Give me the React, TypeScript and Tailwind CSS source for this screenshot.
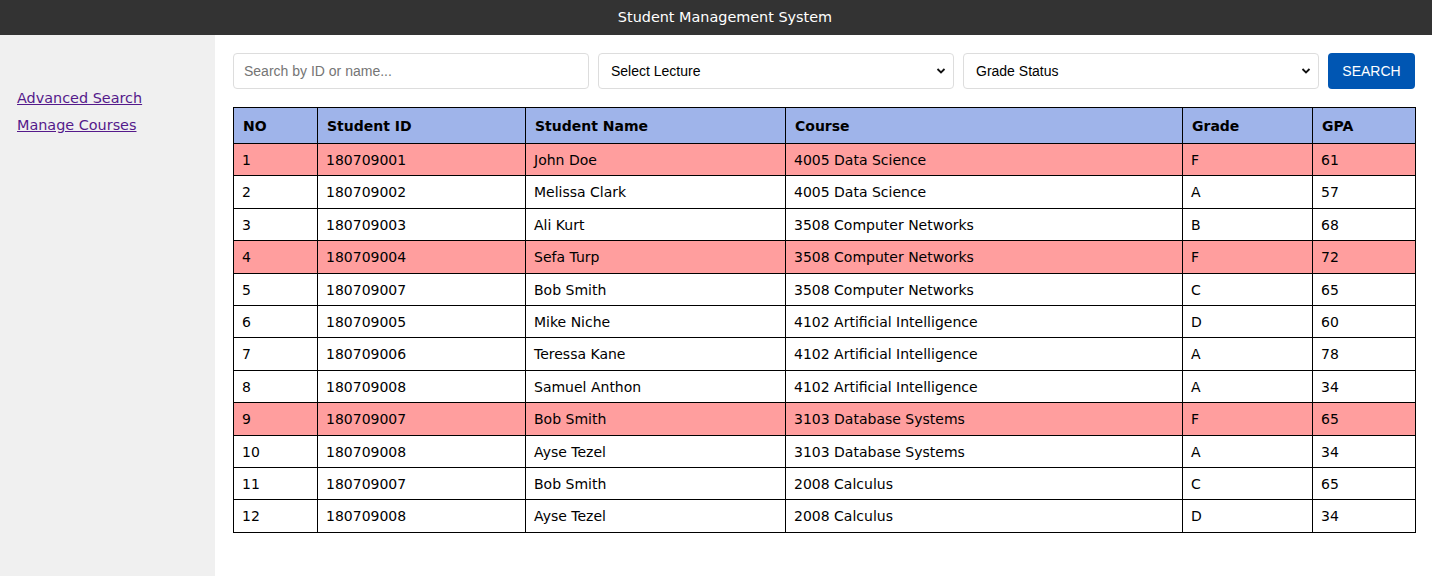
const students = [
  { no: 1, id: '180709001', name: 'John Doe', course: '4005 Data Science', grade: 'F', gpa: 61 },
  { no: 2, id: '180709002', name: 'Melissa Clark', course: '4005 Data Science', grade: 'A', gpa: 57 },
  { no: 3, id: '180709003', name: 'Ali Kurt', course: '3508 Computer Networks', grade: 'B', gpa: 68 },
  { no: 4, id: '180709004', name: 'Sefa Turp', course: '3508 Computer Networks', grade: 'F', gpa: 72 },
  { no: 5, id: '180709007', name: 'Bob Smith', course: '3508 Computer Networks', grade: 'C', gpa: 65 },
  { no: 6, id: '180709005', name: 'Mike Niche', course: '4102 Artificial Intelligence', grade: 'D', gpa: 60 },
  { no: 7, id: '180709006', name: 'Teressa Kane', course: '4102 Artificial Intelligence', grade: 'A', gpa: 78 },
  { no: 8, id: '180709008', name: 'Samuel Anthon', course: '4102 Artificial Intelligence', grade: 'A', gpa: 34 },
  { no: 9, id: '180709007', name: 'Bob Smith', course: '3103 Database Systems', grade: 'F', gpa: 65 },
  { no: 10, id: '180709008', name: 'Ayse Tezel', course: '3103 Database Systems', grade: 'A', gpa: 34 },
  { no: 11, id: '180709007', name: 'Bob Smith', course: '2008 Calculus', grade: 'C', gpa: 65 },
  { no: 12, id: '180709008', name: 'Ayse Tezel', course: '2008 Calculus', grade: 'D', gpa: 34 },
];

const headers = [
  { label: 'NO', w: 'w-[84px]' },
  { label: 'Student ID', w: 'w-[208px]' },
  { label: 'Student Name', w: 'w-[260px]' },
  { label: 'Course', w: 'w-[397px]' },
  { label: 'Grade', w: 'w-[130px]' },
  { label: 'GPA', w: 'w-[103px]' },
];

const Chevron = () => (
  <svg width="10" height="10" viewBox="0 0 10 10" className="pointer-events-none absolute right-[8px] top-1/2 -translate-y-1/2">
    <path d="M1.5 3 L5 6.5 L8.5 3" fill="none" stroke="#111" strokeWidth="1.8" />
  </svg>
);

const App = () => {
  return (
    <div className="flex h-[576px] flex-col font-['DejaVu_Sans',sans-serif]">
      {/* Top bar */}
      <div className="flex h-[35px] shrink-0 items-center justify-center bg-[#333333] pl-[18px] text-[14.4px] text-white">
        Student Management System
      </div>

      <div className="flex flex-1">
        {/* Sidebar */}
        <div className="flex w-[215px] shrink-0 flex-col gap-[5px] bg-[#f0f0f0] px-[17px] pt-[53px] text-[14.4px]">
          <a href="#" className="text-[#551a8b] underline">Advanced Search</a>
          <a href="#" className="text-[#551a8b] underline">Manage Courses</a>
        </div>

        {/* Main */}
        <div className="flex-1 bg-white pl-[18px] pr-[17px] pt-[18px]">
          <div className="flex items-center gap-[9px] font-['Liberation_Sans',Arial,sans-serif] text-[14px]">
            <input
              placeholder="Search by ID or name..."
              className="h-[36px] w-[356px] rounded-[4px] border border-[#dddddd] px-[10px] text-[14px] text-black outline-none placeholder:text-[#757575]"
            />
            <div className="relative w-[356px]">
              <div className="flex h-[36px] items-center rounded-[4px] border border-[#dddddd] px-[12px] text-black">
                Select Lecture
              </div>
              <Chevron />
            </div>
            <div className="relative w-[356px]">
              <div className="flex h-[36px] items-center rounded-[4px] border border-[#dddddd] px-[12px] text-black">
                Grade Status
              </div>
              <Chevron />
            </div>
            <button className="h-[36px] w-[87px] rounded-[4px] bg-[#0056b3] text-[14px] text-white">
              SEARCH
            </button>
          </div>

          <table className="mt-[18px] w-[1181px] table-fixed border-collapse text-[14px] text-black">
            <thead>
              <tr className="bg-[#9fb4ea]">
                {headers.map((h) => (
                  <th
                    key={h.label}
                    className={`${h.w} border border-black px-[9px] pb-[7px] pt-[9px] text-left text-[14px] font-bold leading-[19px]`}
                  >
                    {h.label}
                  </th>
                ))}
              </tr>
            </thead>
            <tbody>
              {students.map((s) => (
                <tr key={s.no} className={s.grade === 'F' ? 'bg-[#ff9e9e]' : 'bg-white'}>
                  <td className="border border-black px-[8px] pb-[7px] pt-[9px] leading-[15.4px]">{s.no}</td>
                  <td className="border border-black px-[8px] pb-[7px] pt-[9px] leading-[15.4px]">{s.id}</td>
                  <td className="border border-black px-[8px] pb-[7px] pt-[9px] leading-[15.4px]">{s.name}</td>
                  <td className="border border-black px-[8px] pb-[7px] pt-[9px] leading-[15.4px]">{s.course}</td>
                  <td className="border border-black px-[8px] pb-[7px] pt-[9px] leading-[15.4px]">{s.grade}</td>
                  <td className="border border-black px-[8px] pb-[7px] pt-[9px] leading-[15.4px]">{s.gpa}</td>
                </tr>
              ))}
            </tbody>
          </table>
        </div>
      </div>
    </div>
  );
};

export default App;
